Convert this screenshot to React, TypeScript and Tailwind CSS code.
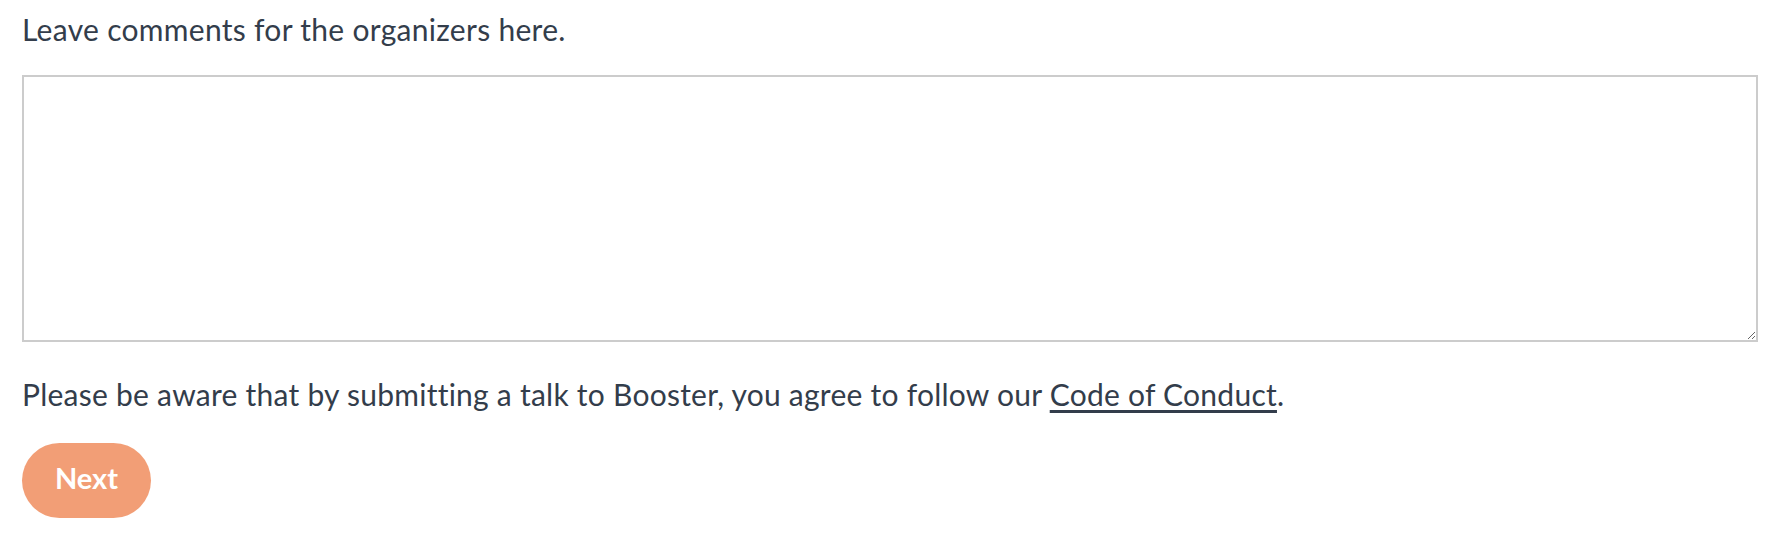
import React, { useState } from "react";

const App: React.FC = () => {
  const [comments, setComments] = useState("");

  return (
    <div className="min-h-screen bg-white px-[22px] pt-[9px] font-['Lato',sans-serif] text-[#333d4b]">
      <label
        htmlFor="comments"
        className="block text-[30px] leading-[40px] tracking-[0.3px]"
      >
        Leave comments for the organizers here.
      </label>
      <textarea
        id="comments"
        value={comments}
        onChange={(e) => setComments(e.target.value)}
        className="mt-[26px] block h-[267px] w-full border-2 border-[#cccccc] bg-white p-3 outline-none"
      />
      <p className="mt-[32px] text-[30px] leading-[40px] tracking-[0.25px]">
        Please be aware that by submitting a talk to Booster, you agree to
        follow our{" "}
        <a href="#" className="underline underline-offset-4">
          Code of Conduct
        </a>
        .
      </p>
      <button className="mt-[29px] h-[75px] w-[129px] rounded-full bg-[#f29e76] pb-[5px] text-[29px] font-bold text-white">
        Next
      </button>
    </div>
  );
};

export default App;
